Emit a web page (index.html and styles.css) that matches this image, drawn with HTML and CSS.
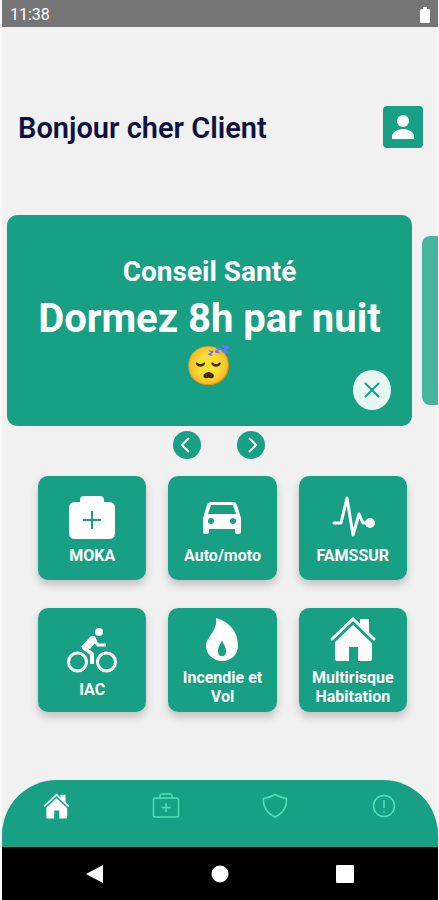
FILE: index.html
```html
<!DOCTYPE html>
<html lang="fr">
<head>
<meta charset="utf-8">
<meta name="viewport" content="width=device-width, initial-scale=1">
<title>Accueil</title>
<link rel="stylesheet" href="styles.css">
</head>
<body>
<svg class="symbols" aria-hidden="true">
  <symbol id="house" viewBox="0 0 48 46">
    <path d="M31 3h9v16l-9-8z"/>
    <path d="M24 5 43 23v20q0 2-2 2H29V31h-9v14H8q-2 0-2-2V23z"/>
    <path class="house-gap" d="M3 27 24 7l21 20"/>
    <path class="house-roof" d="M3 23 24 3l21 20"/>
  </symbol>
</svg>
<div class="app">
  <div class="status">
    <span>11:38</span>
    <svg width="10" height="16" viewBox="0 0 10 16" aria-hidden="true"><path d="M3 0h4v2h2q1 0 1 1v12q0 1-1 1H1q-1 0-1-1V3q0-1 1-1h2z"/></svg>
  </div>

  <header class="header">
    <h1>Bonjour cher Client</h1>
    <button class="profile" type="button" aria-label="Profil">
      <svg width="24" height="26" viewBox="0 0 24 26" aria-hidden="true"><circle cx="12" cy="7" r="6"/><path d="M1 25v-3c0-4 6-7 11-7s11 3 11 7v3z"/></svg>
    </button>
  </header>

  <main class="content">
    <section class="carousel" aria-label="Conseils">
      <article class="tip">
        <h2>Conseil Santé</h2>
        <p>Dormez 8h par nuit <span class="emoji">😴</span></p>
        <button class="close" type="button" aria-label="Fermer">
          <svg width="16" height="16" viewBox="0 0 16 16" aria-hidden="true"><path d="M1 1l14 14M15 1 1 15"/></svg>
        </button>
      </article>
      <div class="next-tip"></div>
    </section>

    <div class="arrows">
      <button type="button" aria-label="Précédent"><svg width="28" height="28" viewBox="0 0 28 28" aria-hidden="true"><path d="M16 7l-7 7 7 7"/></svg></button>
      <button type="button" aria-label="Suivant"><svg width="28" height="28" viewBox="0 0 28 28" aria-hidden="true"><path d="M12 7l7 7-7 7"/></svg></button>
    </div>

    <div class="tiles">
      <button class="tile" type="button">
        <svg width="48" height="46" viewBox="0 0 48 46" aria-hidden="true">
          <path d="M7 8h5V6q0-4 4-4h16q4 0 4 4v2h5q6 0 6 6v25q0 6-6 6H7q-6 0-6-6V14q0-6 6-6z"/>
          <path class="cut" d="M24 17v18M15 26h18"/>
        </svg>
        <span>MOKA</span>
      </button>
      <button class="tile" type="button">
        <svg width="40" height="46" viewBox="0 0 40 46" aria-hidden="true">
          <path fill-rule="evenodd" d="M9 8h22q3 0 4 3l4 13v14q0 2-2 2h-2q-2 0-2-2v-3H7v3q0 2-2 2H3q-2 0-2-2V24L5 11q1-3 4-3zM9 11 6 20h28l-3-9zM9 24a3 3 0 1 0 0 6 3 3 0 1 0 0-6zM31 24a3 3 0 1 0 0 6 3 3 0 1 0 0-6z"/>
        </svg>
        <span>Auto/moto</span>
      </button>
      <button class="tile" type="button">
        <svg width="46" height="46" viewBox="0 0 46 46" aria-hidden="true">
          <path class="line" d="M4 29h7l6-25 6 37 6-21 4 9h7"/>
          <circle cx="40" cy="29" r="5"/>
        </svg>
        <span>FAMSSUR</span>
      </button>
      <button class="tile" type="button">
        <svg width="50" height="50" viewBox="0 0 50 50" aria-hidden="true">
          <circle class="wheel" cx="10.500" cy="38" r="9"/>
          <circle class="wheel" cx="39.500" cy="38" r="9"/>
          <circle cx="32" cy="8" r="4"/>
          <path class="limb" d="M25 15 17 24l8 6v10"/>
          <path class="arm" d="M26 15l5 6h8"/>
          <path d="M14 23 24 12h4l2 5-7 8z"/>
        </svg>
        <span>IAC</span>
      </button>
      <button class="tile" type="button">
        <svg width="34" height="46" viewBox="0 0 34 46" aria-hidden="true">
          <path d="M11 2c12 3 22 13 22 27 0 10-7 16-16 16S1 38 1 30c0-9 12-15 10-28z"/>
          <path class="drop" d="M17 24c1 4 4 6 4 11 0 3-1 5-4 5s-4-2-4-5c0-5 3-7 4-11z"/>
        </svg>
        <span>Incendie et Vol</span>
      </button>
      <button class="tile" type="button">
        <svg width="48" height="46" aria-hidden="true"><use href="#house"/></svg>
        <span>Multirisque Habitation</span>
      </button>
    </div>
  </main>

  <nav class="tabs" aria-label="Navigation principale">
    <a href="#accueil" aria-label="Accueil" aria-current="page"><svg width="27" height="26" aria-hidden="true"><use href="#house"/></svg></a>
    <a href="#sante" aria-label="Santé"><svg width="28" height="26" viewBox="0 0 28 26" aria-hidden="true"><rect x="1.500" y="5" width="25" height="19" rx="2"/><path d="M8 5V3q0-2 2-2h8q2 0 2 2v2M14 10v9M9.500 14.500h9"/></svg></a>
    <a href="#protection" aria-label="Protection"><svg width="28" height="26" viewBox="0 0 28 26" aria-hidden="true"><path d="M14 1.500c4 2.500 7 3.500 11.500 4 .5 8.500-4 15-11.500 18.500C6.500 20.500 2 14 2.500 5.500 7 5 10 4 14 1.500z"/></svg></a>
    <a href="#infos" aria-label="Informations"><svg width="26" height="26" viewBox="0 0 26 26" aria-hidden="true"><circle cx="13" cy="13" r="10.500"/><path d="M13 7v8M13 17.500v2"/></svg></a>
  </nav>

  <div class="system">
    <button type="button" aria-label="Retour"><svg width="18" height="18" viewBox="0 0 18 18" aria-hidden="true"><path d="M17 0v18L0 9z"/></svg></button>
    <button type="button" aria-label="Écran d’accueil"><svg width="18" height="18" viewBox="0 0 18 18" aria-hidden="true"><circle cx="9" cy="9" r="8.500"/></svg></button>
    <button type="button" aria-label="Applications récentes"><svg width="18" height="18" viewBox="0 0 18 18" aria-hidden="true"><rect width="18" height="18" rx="1"/></svg></button>
  </div>
</div>
</body>
</html>
```
FILE: styles.css
```css
:root {
  --green: #18a085;
  --page: #f1f1f1;
  --mint: #51e0b8;
}

* { box-sizing: border-box; }

body {
  margin: 0;
  background: #fafafa;
  font-family: Roboto, "Liberation Sans", sans-serif;
}

button {
  padding: 0;
  border: 0;
  font: inherit;
  color: inherit;
  background: none;
}

svg { display: block; fill: currentColor; }

h1, h2, p { margin: 0; }

.symbols { position: absolute; width: 0; height: 0; }

.app {
  display: flex;
  flex-direction: column;
  min-height: 100vh;
  margin: 0 1px 0 2px;
  background: var(--page);
  overflow: hidden;
}

.status {
  display: flex;
  align-items: center;
  justify-content: space-between;
  height: 27px;
  padding: 2px 8px 0;
  color: #fff;
  background: #757575;
  font-size: 16px;
}

.header {
  display: flex;
  align-items: center;
  justify-content: space-between;
  padding: 79px 15px 67px 16px;
}

.header h1 {
  padding-top: 2px;
  color: #0c133f;
  font-size: 29px;
  font-weight: 600;
  line-height: 40px;
}

.profile {
  display: grid;
  place-items: center;
  width: 40px;
  height: 42px;
  border-radius: 4px;
  color: #fff;
  background: var(--green);
}

.content { flex: 1; }

.carousel {
  display: flex;
  align-items: center;
  gap: 10px;
  padding-left: 5px;
}

.tip {
  position: relative;
  flex: 1;
  min-height: 211px;
  padding: 40px 28px 36px;
  border-radius: 10px;
  color: #fff;
  background: var(--green);
  text-align: center;
}

.tip h2 {
  font-size: 28px;
  font-weight: 700;
  line-height: 34px;
}

.tip p {
  margin-top: 6px;
  font-size: 40px;
  font-weight: 700;
  line-height: 47px;
}

.emoji {
  font-family: "Noto Color Emoji", sans-serif;
  font-size: 38px;
  font-weight: 400;
}

.close {
  position: absolute;
  right: 21px;
  bottom: 16px;
  display: grid;
  place-items: center;
  width: 38px;
  height: 40px;
  border-radius: 50%;
  color: var(--green);
  background: #e8f6f3;
}

.close svg { fill: none; stroke: currentColor; stroke-width: 2; }

.next-tip {
  width: 16px;
  height: 169px;
  border-radius: 8px 0 0 8px;
  background: #48b39d;
}

.arrows {
  display: flex;
  justify-content: center;
  gap: 36px;
  padding: 5px 2px 0 0;
}

.arrows button {
  border-radius: 50%;
  color: #fff;
  background: var(--green);
}

.arrows svg { fill: none; stroke: currentColor; stroke-width: 2; }

.tiles {
  display: grid;
  grid-template-columns: repeat(3, 1fr);
  gap: 28px 22px;
  padding: 17px 31px 28px 36px;
}

.tile {
  display: flex;
  flex-direction: column;
  align-items: center;
  justify-content: center;
  gap: 6px;
  min-height: 104px;
  padding: 2px 10px 0;
  border-radius: 10px;
  color: #fff;
  background: var(--green);
  box-shadow: 0 5px 9px rgb(0 0 0 / 20%);
  font-size: 16px;
  font-weight: 700;
  line-height: 19px;
}

.tile svg { flex: none; }

.cut { fill: none; stroke: var(--green); stroke-width: 2; }
.line { fill: none; stroke: currentColor; stroke-width: 3; stroke-linejoin: round; stroke-linecap: round; }
.wheel { fill: none; stroke: currentColor; stroke-width: 3; }
.limb { fill: none; stroke: currentColor; stroke-width: 4; stroke-linejoin: round; }
.arm { fill: none; stroke: currentColor; stroke-width: 3; }
.drop { fill: var(--green); }
.house-gap { fill: none; stroke: var(--green); stroke-width: 3; }
.house-roof { fill: none; stroke: #fff; stroke-width: 3; stroke-linecap: round; }

.tabs {
  display: grid;
  grid-template-columns: repeat(4, 1fr);
  justify-items: center;
  height: 67px;
  padding-top: 13px;
  border-radius: 55px 55px 0 0;
  background: var(--green);
}

.tabs a { color: var(--mint); }
.tabs a svg { fill: none; stroke: currentColor; stroke-width: 1.5; }
.tabs a[aria-current] { color: #fff; }
.tabs a[aria-current] svg { fill: currentColor; stroke: none; }

.system {
  display: grid;
  grid-template-columns: repeat(3, 1fr);
  place-items: center;
  height: 53px;
  padding: 0 30px;
  color: #fff;
  background: #000;
}
```
